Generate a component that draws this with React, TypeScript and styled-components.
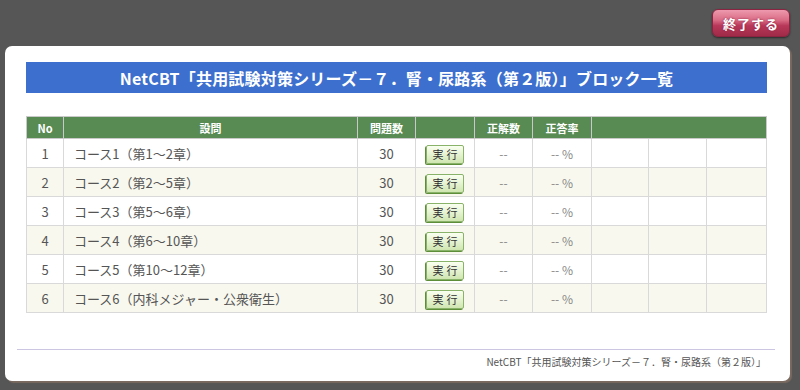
import React from "react";
import styled, { createGlobalStyle } from "styled-components";

const GlobalStyle = createGlobalStyle`
	html, body {
		margin: 0;
		padding: 0;
		background-color: #565656;
		font-family: "Noto Sans CJK JP", "Noto Sans", sans-serif;
	}
`;

const Page = styled.div`
	width: 800px;
	height: 390px;
	display: flex;
	flex-direction: column;
	box-sizing: border-box;
`;

const TopBar = styled.div`
	display: flex;
	justify-content: flex-end;
	padding: 9px 10px 0 0;
	height: 37px;
	box-sizing: border-box;
`;

const ExitButton = styled.button`
	width: 78px;
	height: 28px;
	border: 1px solid #8a2440;
	border-radius: 6px;
	background: linear-gradient(#ee9aae 0%, #d86a84 40%, #b8385a 60%, #a02a48 100%);
	color: #fff;
	font-family: "Noto Sans CJK JP", sans-serif;
	font-size: 13px;
	font-weight: bold;
	letter-spacing: 1px;
	text-shadow: 0 0 2px #8a2440;
	box-shadow: 0 1px 2px rgba(0, 0, 0, 0.5);
	padding: 0;
`;

const Panel = styled.div`
	margin: 9px 10px 0 5px;
	height: 335px;
	background: #fff;
	border-radius: 7px;
	box-shadow: 2px 2px 1px #7a6a60;
	display: flex;
	flex-direction: column;
	padding: 16px 23px 0 21px;
	box-sizing: border-box;
`;

const TitleBar = styled.div`
	height: 31px;
	background: #3d6fce;
	color: #fff;
	font-size: 16px;
	font-weight: bold;
	display: flex;
	align-items: center;
	justify-content: center;
	letter-spacing: 0.2px;
`;

const Table = styled.table`
	margin-top: 23px;
	width: 100%;
	border-collapse: collapse;
	table-layout: fixed;
	font-size: 13px;
	color: #555;
`;

const HeadCell = styled.th<{ w?: number }>`
	background: #588b54;
	color: #fff;
	font-size: 11px;
	font-weight: bold;
	height: 21px;
	padding: 0;
	border: 1px solid #c9c9c9;
	width: ${({ w }) => (w ? `${w}px` : "auto")};
`;

const Row = styled.tr<{ alt: boolean }>`
	background: ${({ alt }) => (alt ? "#f8f8ee" : "#fff")};
`;

const Cell = styled.td<{ align?: string; pad?: number }>`
	height: 28px;
	padding: 0 0 0 ${({ pad }) => pad ?? 0}px;
	border: 1px solid #d9d9d9;
	text-align: ${({ align }) => align ?? "center"};
	color: #555;
`;

const Dash = styled.span`
	color: #888;
	font-size: 12px;
`;

const RunButton = styled.button`
	width: 38px;
	height: 19px;
	padding: 0;
	border: 1px solid #8ab36a;
	border-radius: 2px;
	background: linear-gradient(#fafff0 0%, #e6f3d2 50%, #cfe5b0 100%);
	box-shadow: -1px 1px 0 #5e8d3a;
	font-family: "Noto Sans CJK JP", sans-serif;
	font-size: 11px;
	letter-spacing: 3px;
	color: #333;
	text-indent: 3px;
	margin-top: 2px;
`;

const Footer = styled.div`
	margin: auto -8px 0 -9px;
	border-top: 1px solid #cdc6e2;
	padding: 4px 9px 0 0;
	height: 32px;
	box-sizing: border-box;
	text-align: right;
	font-size: 10px;
	color: #555;
`;

const courses = [
	"コース1（第1～2章）",
	"コース2（第2～5章）",
	"コース3（第5～6章）",
	"コース4（第6～10章）",
	"コース5（第10～12章）",
	"コース6（内科メジャー・公衆衛生）",
];

const App: React.FC = () => {
	return (
		<Page>
			<GlobalStyle />
			<TopBar>
				<ExitButton>終了する</ExitButton>
			</TopBar>
			<Panel>
				<TitleBar>NetCBT「共用試験対策シリーズ－７．腎・尿路系（第２版）」ブロック一覧</TitleBar>
				<Table>
					<colgroup>
						<col style={{ width: 37 }} />
						<col style={{ width: 294 }} />
						<col style={{ width: 58 }} />
						<col style={{ width: 59 }} />
						<col style={{ width: 58 }} />
						<col style={{ width: 59 }} />
						<col style={{ width: 57 }} />
						<col style={{ width: 58 }} />
						<col />
					</colgroup>
					<thead>
						<tr>
							<HeadCell>No</HeadCell>
							<HeadCell>設問</HeadCell>
							<HeadCell>問題数</HeadCell>
							<HeadCell></HeadCell>
							<HeadCell>正解数</HeadCell>
							<HeadCell>正答率</HeadCell>
							<HeadCell colSpan={3}></HeadCell>
						</tr>
					</thead>
					<tbody>
						{courses.map((c, i) => (
							<Row key={c} alt={i % 2 === 1}>
								<Cell>{i + 1}</Cell>
								<Cell align="left" pad={10}>{c}</Cell>
								<Cell>30</Cell>
								<Cell>
									<RunButton>実行</RunButton>
								</Cell>
								<Cell><Dash>--</Dash></Cell>
								<Cell><Dash>-- %</Dash></Cell>
								<Cell></Cell>
								<Cell></Cell>
								<Cell></Cell>
							</Row>
						))}
					</tbody>
				</Table>
				<Footer>NetCBT「共用試験対策シリーズ－７．腎・尿路系（第２版）」</Footer>
			</Panel>
		</Page>
	);
};

export default App;
